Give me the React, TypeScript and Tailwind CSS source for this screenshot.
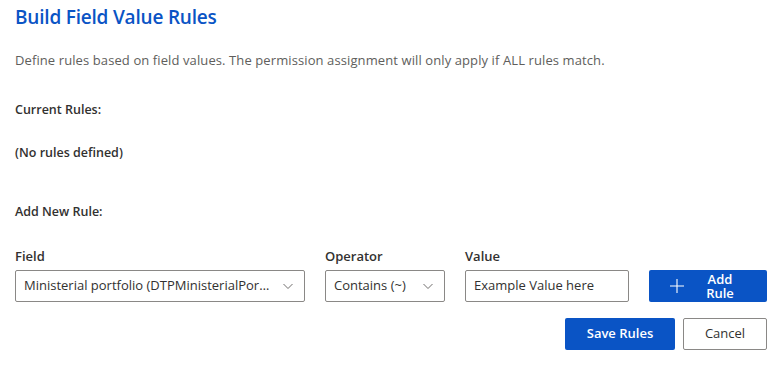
import React from "react";

function Chevron() {
  return (
    <svg width="12" height="12" viewBox="0 0 12 12" className="shrink-0">
      <path d="M1.5 4 L6 8.5 L10.5 4" fill="none" stroke="#605e5c" strokeWidth="0.9" />
    </svg>
  );
}

export default function App() {
  return (
    <div className="w-[780px] h-[370px] bg-white pl-[15px] pr-[13px] pt-[3px] flex flex-col font-['Open_Sans',sans-serif]">
      <h2 className="text-[19px] leading-[28px] font-semibold text-[#0a54c5] tracking-[-0.2px]">
        Build Field Value Rules
      </h2>
      <p className="mt-[19px] text-[13px] leading-[20px] text-[#605e5c] tracking-[0.1px] whitespace-nowrap">
        Define rules based on field values. The permission assignment will only apply if ALL rules match.
      </p>
      <div className="mt-[30px] text-[12.5px] leading-[20px] font-semibold text-[#323130]">Current Rules:</div>
      <div className="mt-[23px] text-[12.5px] leading-[20px] font-semibold text-[#323130]">(No rules defined)</div>
      <div className="mt-[39px] text-[12.5px] leading-[20px] font-semibold text-[#323130]">Add New Rule:</div>

      <div className="mt-[24px] flex items-end">
        <div className="flex flex-col w-[290px] shrink-0">
          <label className="text-[13px] leading-[20px] font-semibold text-[#323130]">Field</label>
          <div className="mt-[4px] h-[32px] border border-[#8a8886] rounded-[2px] flex items-center pl-[8px] pr-[10px]">
            <span className="flex-1 truncate text-[13px] text-[#323130]">
              Ministerial portfolio (DTPMinisterialPor…
            </span>
            <span className="ml-[8px]"><Chevron /></span>
          </div>
        </div>
        <div className="flex flex-col w-[120px] ml-[20px] shrink-0">
          <label className="text-[13px] leading-[20px] font-semibold text-[#323130]">Operator</label>
          <div className="mt-[4px] h-[32px] border border-[#8a8886] rounded-[2px] flex items-center pl-[8px] pr-[10px]">
            <span className="flex-1 truncate text-[13px] text-[#323130]">Contains (~)</span>
            <Chevron />
          </div>
        </div>
        <div className="flex flex-col w-[164px] ml-[20px] shrink-0">
          <label className="text-[13px] leading-[20px] font-semibold text-[#323130]">Value</label>
          <div className="mt-[4px] h-[32px] border border-[#8a8886] rounded-[2px] flex items-center px-[8px]">
            <span className="text-[13px] text-[#323130]">Example Value here</span>
          </div>
        </div>
        <button className="ml-[20px] w-[118px] h-[32px] shrink-0 bg-[#0a54c5] rounded-[2px] flex items-center px-[16px] text-white">
          <svg width="16" height="16" viewBox="0 0 16 16" className="mx-[4px] shrink-0">
            <path d="M8 1 V15 M1 8 H15" stroke="#ffffff" strokeWidth="1.1" fill="none" />
          </svg>
          <span className="flex-1 flex flex-col items-center text-[13px] leading-[14px] font-semibold">
            <span>Add</span>
            <span>Rule</span>
          </span>
        </button>
      </div>

      <div className="mt-[16px] flex justify-end gap-[8px]">
        <button className="w-[110px] h-[32px] bg-[#0a54c5] rounded-[2px] text-white text-[13px] font-semibold">
          Save Rules
        </button>
        <button className="w-[84px] h-[32px] bg-white border border-[#8a8886] rounded-[2px] text-[#323130] text-[13px]">
          Cancel
        </button>
      </div>
    </div>
  );
}
